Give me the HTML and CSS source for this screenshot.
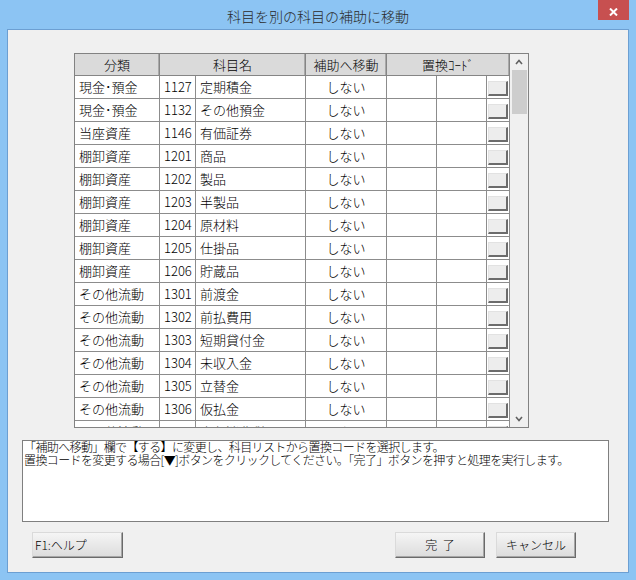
FILE: index.html
```html
<!DOCTYPE html>
<html lang="ja">
<head>
<meta charset="utf-8">
<title>科目を別の科目の補助に移動</title>
<link rel="stylesheet" href="styles.css">
</head>
<body>
<div class="window">
  <div class="titlebar">
    <div class="title">科目を別の科目の補助に移動</div>
    <div class="close"><svg width="9" height="8" viewBox="0 0 9 8"><path d="M1 0.5 L8 7.5 M8 0.5 L1 7.5" stroke="#fff" stroke-width="2"/></svg></div>
  </div>
  <div class="client">
    <div class="grid">
      <div class="table">
        <div class="hrow">
          <div class="hc">分類</div>
          <div class="hc">科目名</div>
          <div class="hc">補助へ移動</div>
          <div class="hc">置換ｺｰﾄﾞ</div>
        </div>
        <div class="row"><div class="c">現金･預金</div><div class="c">1127</div><div class="c">定期積金</div><div class="c mid">しない</div><div class="c"></div><div class="c"></div><div class="c"><div class="mini"></div></div></div>
        <div class="row"><div class="c">現金･預金</div><div class="c">1132</div><div class="c">その他預金</div><div class="c mid">しない</div><div class="c"></div><div class="c"></div><div class="c"><div class="mini"></div></div></div>
        <div class="row"><div class="c">当座資産</div><div class="c">1146</div><div class="c">有価証券</div><div class="c mid">しない</div><div class="c"></div><div class="c"></div><div class="c"><div class="mini"></div></div></div>
        <div class="row"><div class="c">棚卸資産</div><div class="c">1201</div><div class="c">商品</div><div class="c mid">しない</div><div class="c"></div><div class="c"></div><div class="c"><div class="mini"></div></div></div>
        <div class="row"><div class="c">棚卸資産</div><div class="c">1202</div><div class="c">製品</div><div class="c mid">しない</div><div class="c"></div><div class="c"></div><div class="c"><div class="mini"></div></div></div>
        <div class="row"><div class="c">棚卸資産</div><div class="c">1203</div><div class="c">半製品</div><div class="c mid">しない</div><div class="c"></div><div class="c"></div><div class="c"><div class="mini"></div></div></div>
        <div class="row"><div class="c">棚卸資産</div><div class="c">1204</div><div class="c">原材料</div><div class="c mid">しない</div><div class="c"></div><div class="c"></div><div class="c"><div class="mini"></div></div></div>
        <div class="row"><div class="c">棚卸資産</div><div class="c">1205</div><div class="c">仕掛品</div><div class="c mid">しない</div><div class="c"></div><div class="c"></div><div class="c"><div class="mini"></div></div></div>
        <div class="row"><div class="c">棚卸資産</div><div class="c">1206</div><div class="c">貯蔵品</div><div class="c mid">しない</div><div class="c"></div><div class="c"></div><div class="c"><div class="mini"></div></div></div>
        <div class="row"><div class="c">その他流動</div><div class="c">1301</div><div class="c">前渡金</div><div class="c mid">しない</div><div class="c"></div><div class="c"></div><div class="c"><div class="mini"></div></div></div>
        <div class="row"><div class="c">その他流動</div><div class="c">1302</div><div class="c">前払費用</div><div class="c mid">しない</div><div class="c"></div><div class="c"></div><div class="c"><div class="mini"></div></div></div>
        <div class="row"><div class="c">その他流動</div><div class="c">1303</div><div class="c">短期貸付金</div><div class="c mid">しない</div><div class="c"></div><div class="c"></div><div class="c"><div class="mini"></div></div></div>
        <div class="row"><div class="c">その他流動</div><div class="c">1304</div><div class="c">未収入金</div><div class="c mid">しない</div><div class="c"></div><div class="c"></div><div class="c"><div class="mini"></div></div></div>
        <div class="row"><div class="c">その他流動</div><div class="c">1305</div><div class="c">立替金</div><div class="c mid">しない</div><div class="c"></div><div class="c"></div><div class="c"><div class="mini"></div></div></div>
        <div class="row"><div class="c">その他流動</div><div class="c">1306</div><div class="c">仮払金</div><div class="c mid">しない</div><div class="c"></div><div class="c"></div><div class="c"><div class="mini"></div></div></div>
        <div class="row"><div class="c">その他流動</div><div class="c">1307</div><div class="c">未収消費税</div><div class="c mid">しない</div><div class="c"></div><div class="c"></div><div class="c"><div class="mini"></div></div></div>
      </div>
      <div class="vscroll">
        <div class="arrow"><svg width="8" height="6" viewBox="0 0 8 6"><path d="M1 5 L4 1.5 L7 5" fill="none" stroke="#606060" stroke-width="1.6"/></svg></div>
        <div class="thumb"></div>
        <div class="track"></div>
        <div class="arrow"><svg width="8" height="6" viewBox="0 0 8 6"><path d="M1 1 L4 4.5 L7 1" fill="none" stroke="#606060" stroke-width="1.6"/></svg></div>
      </div>
    </div>
    <div class="message">「補助へ移動」欄で【する】に変更し、科目リストから置換コードを選択します。<br>置換コードを変更する場合[▼]ボタンをクリックしてください。「完了」ボタンを押すと処理を実行します。</div>
    <div class="buttons">
      <div class="btn help">F1:ヘルプ</div>
      <div class="btn ok">完&nbsp;&nbsp;了</div>
      <div class="btn cancel">キャンセル</div>
    </div>
  </div>
</div>
</body>
</html>
```
FILE: styles.css
```css
body {
  margin: 0;
  background: #8cc4f3;
}
.window {
  width: 636px;
  height: 580px;
  background: #8cc4f3;
  font-family: "Noto Sans CJK JP", sans-serif;
  font-weight: 300;
  color: #000;
  overflow: hidden;
}
.titlebar {
  height: 29px;
  display: grid;
  grid-template-columns: 1fr auto 1fr;
}
.title {
  grid-column: 2;
  padding-top: 3px;
  line-height: 26px;
  font-size: 14px;
  color: #2a2a2a;
  white-space: nowrap;
}
.close {
  grid-column: 3;
  justify-self: end;
  align-self: start;
  width: 31px;
  height: 20px;
  margin-right: 7px;
  background: #c75050;
  display: flex;
  align-items: center;
  justify-content: center;
  padding-top: 3px;
  box-sizing: border-box;
}
.client {
  margin: 0 7px;
  width: 622px;
  height: 544px;
  box-sizing: border-box;
  border: 1px solid #6c9fd2;
  background: #f0f0f0;
  padding: 23px 0 0 0;
}
.grid {
  margin-left: 66px;
  width: 455px;
  height: 375px;
  box-sizing: border-box;
  border: 1px solid #828282;
  display: flex;
  overflow: hidden;
}
.table {
  width: 435px;
  flex: none;
  background: #fff;
  overflow: hidden;
  font-size: 13px;
}
.hrow {
  display: grid;
  grid-template-columns: 85px 146px 81px 123px;
  height: 22px;
  background: #dadada;
}
.hc {
  box-sizing: border-box;
  border-right: 1px solid #858585;
  border-bottom: 1px solid #858585;
  box-shadow: inset -1px 0 0 #a9a9a9;
  text-align: center;
  line-height: 21px;
  white-space: nowrap;
}
.row {
  display: grid;
  grid-template-columns: 85px 36px 110px 81px 50px 50px 23px;
  height: 23px;
}
.c {
  box-sizing: border-box;
  border-right: 1px solid #8c8c8c;
  border-bottom: 1px solid #8c8c8c;
  padding-left: 4px;
  line-height: 22px;
  white-space: nowrap;
  overflow: hidden;
}
.c.mid {
  text-align: center;
  padding-left: 0;
}
.mini {
  width: 20px;
  height: 15px;
  margin: 5px 0 0 -3px;
  box-sizing: border-box;
  background: #ededed;
  border-top: 1px solid #e2e2e2;
  border-left: 1px solid #e2e2e2;
  border-right: 2px solid #6c6c6c;
  border-bottom: 2px solid #6c6c6c;
}
.vscroll {
  width: 18px;
  flex: none;
  background: #f0f0f0;
  display: flex;
  flex-direction: column;
}
.arrow {
  height: 16px;
  display: flex;
  align-items: center;
  justify-content: center;
}
.thumb {
  height: 44px;
  margin: 0 1px 0 2px;
  background: #cdcdcd;
}
.track {
  flex: 1;
}
.message {
  margin: 12px 0 0 14px;
  width: 587px;
  height: 82px;
  box-sizing: border-box;
  border: 1px solid #7f7f7f;
  background: #fff;
  padding: 0 0 0 1px;
  font-size: 12px;
  line-height: 12.5px;
  letter-spacing: -0.62px;
  white-space: nowrap;
}
.buttons {
  display: flex;
  margin-top: 10px;
  padding: 0 52px 0 24px;
  gap: 11px;
}
.btn {
  height: 26px;
  box-sizing: border-box;
  background: linear-gradient(#f5f5f5, #dcdcdc);
  border-top: 1px solid #dadada;
  border-left: 1px solid #dadada;
  border-right: 1px solid #6a6a6a;
  border-bottom: 1px solid #6a6a6a;
  box-shadow: inset -1px -1px 0 #a6a6a6;
  font-size: 12px;
  line-height: 24px;
  text-align: center;
  white-space: nowrap;
}
.help {
  width: 91px;
  text-align: left;
  padding-left: 2px;
}
.ok {
  width: 90px;
  margin-left: auto;
}
.cancel {
  width: 80px;
}
```
